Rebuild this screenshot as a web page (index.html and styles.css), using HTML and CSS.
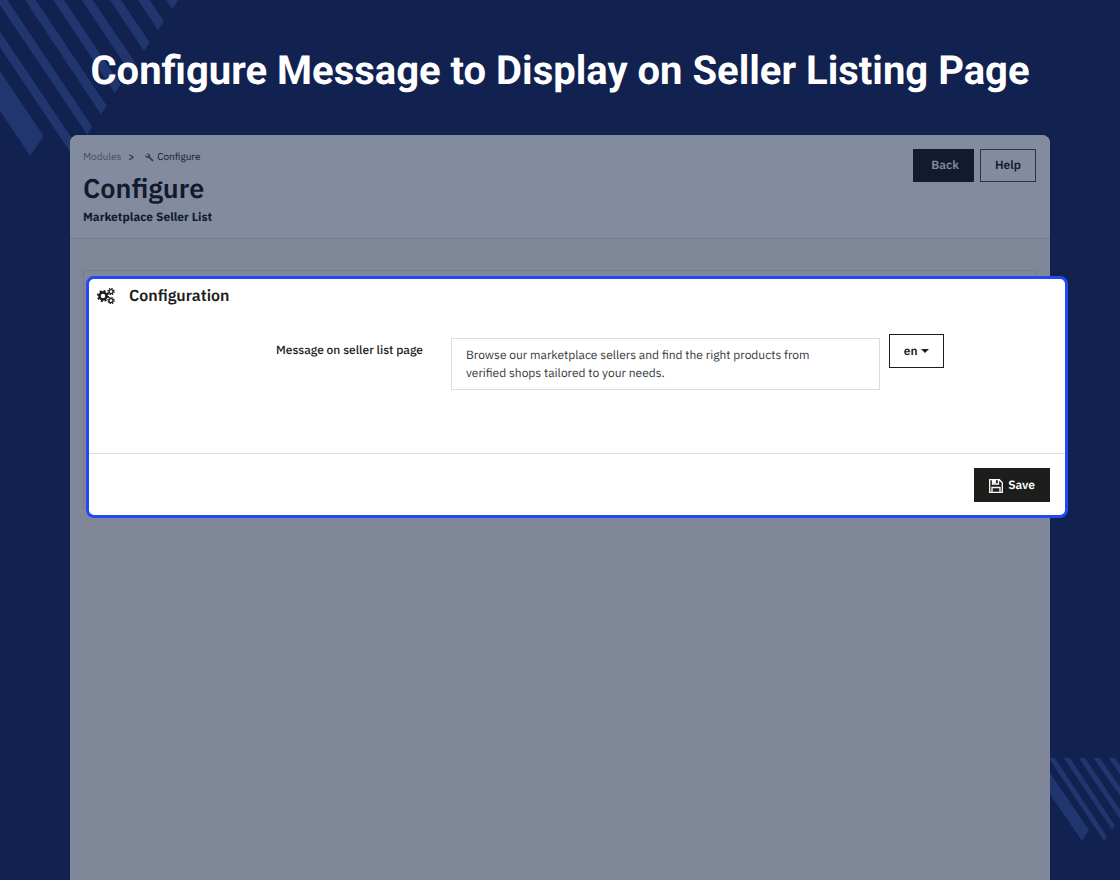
FILE: index.html
```html
<!DOCTYPE html>
<html lang="en">
<head>
    <meta charset="UTF-8">
    <meta name="viewport" content="width=device-width, initial-scale=1.0">
    <title>Configure - Marketplace Seller List</title>
    <link rel="stylesheet" href="styles.css">
</head>
<body>
    <!-- Background stripes -->
    <svg class="stripes stripes-top" width="180" height="160" viewBox="0 0 540 480" aria-hidden="true">
        <path d="M-225 0L91 468L131 408L-144 0ZM-95 0L218 467L235 443L-64 0ZM-10 0L262 404L277 380L22 0ZM75 0L303 343L320 317L107 0ZM160 0L345 279L362 254L192 0ZM245 0L389 216L407 190L278 0ZM330 0L432 153L449 127L363 0ZM414 0L474 90L492 64L449 0ZM499 0L517 27L535 0Z"/>
    </svg>
    <svg class="stripes stripes-bottom" width="70" height="84" viewBox="0 0 210 252" aria-hidden="true">
        <path d="M-74 0L96 249L117 216L-31 0ZM-4 0L162 249L171 236L15 0ZM41 0L187 216L195 203L60 0ZM86 0L212 186L212 158L105 0ZM131 0L212 118L212 90L150 0ZM176 0L212 52L212 24L195 0Z"/>
    </svg>

    <h1 class="banner-title">Configure Message to Display on Seller Listing Page</h1>

    <main class="window">
        <header class="page-head">
            <div>
                <nav class="breadcrumb">
                    <a href="#">Modules</a>
                    <span class="sep">&gt;</span>
                    <svg width="9" height="9" viewBox="0 0 24 24" aria-hidden="true">
                        <path d="M22.7 19l-9.100-9.100c.9-2.300.4-5-1.500-6.900-2-2-5-2.400-7.400-1.300L9 6 6 9 1.600 4.700C.4 7.100.9 10.100 2.900 12.100c1.900 1.900 4.600 2.400 6.900 1.500l9.100 9.100c.4.400 1 .4 1.400 0l2.300-2.300c.5-.4.5-1.100.1-1.400z"/>
                    </svg>
                    <span class="current">Configure</span>
                </nav>
                <h2 class="page-title">Configure</h2>
                <p class="page-subtitle">Marketplace Seller List</p>
            </div>
            <div class="actions">
                <button type="button" class="btn btn-back">Back</button>
                <button type="button" class="btn btn-help">Help</button>
            </div>
        </header>

        <div class="content">
            <div class="panel">
                <form class="card">
                    <h3 class="card-title">
                        <svg width="18" height="16" viewBox="0 0 36 32" aria-hidden="true">
                            <circle class="gear-ring" cx="12" cy="16" r="7"/>
                            <circle class="gear-teeth" cx="12" cy="16" r="10"/>
                            <circle class="small-ring" cx="28" cy="7" r="4"/>
                            <circle class="small-teeth" cx="28" cy="7" r="6"/>
                            <circle class="small-ring" cx="28" cy="25" r="4"/>
                            <circle class="small-teeth" cx="28" cy="25" r="6"/>
                        </svg>
                        Configuration
                    </h3>
                    <div class="form-row">
                        <label for="message">Message on seller list page</label>
                        <textarea id="message" rows="2">Browse our marketplace sellers and find the right products from verified shops tailored to your needs.</textarea>
                        <button type="button" class="btn btn-lang">en <span class="caret"></span></button>
                    </div>
                    <div class="card-foot">
                        <button type="submit" class="btn btn-save">
                            <svg width="14" height="14" viewBox="0 0 14 14" aria-hidden="true">
                                <path d="M.7.7H10.300L13.300 3.700V13.300H.7ZM3.500.7V5H9.500V.7M3 13.300V8.500H11V13.300"/>
                                <path class="solid" d="M4 1H7V4H4Z"/>
                            </svg>
                            Save
                        </button>
                    </div>
                </form>
            </div>
        </div>
    </main>
</body>
</html>
```
FILE: styles.css
```css
* {
    box-sizing: border-box;
}
body {
    margin: 0;
    min-height: 100vh;
    display: flex;
    flex-direction: column;
    position: relative;
    background-color: #112150;
    font-family: "IBM Plex Sans", "Noto Sans", sans-serif;
    font-size: 12px;
    line-height: 18px;
    text-rendering: geometricPrecision;
    color: #1d1d1b;
}
h1, h2, h3, p {
    margin: 0;
}
.stripes {
    position: absolute;
    fill: #21366e;
}
.stripes-top {
    left: 0;
    top: 0;
}
.stripes-bottom {
    right: 0;
    bottom: 38px;
}
.banner-title {
    position: relative;
    padding: 47px 20px 40px;
    font-family: Roboto, sans-serif;
    font-size: 40px;
    font-weight: 700;
    line-height: 48px;
    text-align: center;
    color: #fff;
}
/* dimmed admin window */
.window {
    flex: 1;
    position: relative;
    margin: 0 70px;
    border-radius: 8px 8px 0 0;
    background-color: #7f8799;
}
.page-head {
    display: flex;
    justify-content: space-between;
    align-items: flex-start;
    height: 104px;
    padding: 14px 14px 0 13px;
    border-bottom: 1px solid #778093;
    border-radius: 8px 8px 0 0;
    background-color: #838c9e;
    color: #121a2e;
}
.breadcrumb {
    display: flex;
    align-items: center;
    font-size: 10px;
    line-height: 16px;
}
.breadcrumb a {
    color: #444d63;
    text-decoration: none;
}
.breadcrumb .sep {
    margin: 0 11px 0 7px;
}
.breadcrumb svg {
    margin-right: 3px;
    fill: #3b4459;
}
.page-title {
    margin-top: 4px;
    font-size: 27px;
    font-weight: 600;
    line-height: 40px;
}
.page-subtitle {
    font-size: 12px;
    font-weight: 700;
}
.actions {
    display: flex;
    gap: 6px;
}
.btn {
    padding: 7px 14px 6px;
    font-family: inherit;
    font-size: 12px;
    font-weight: 600;
    line-height: 18px;
    text-rendering: inherit;
    border: 1px solid #1d1d1b;
    cursor: pointer;
}
.btn-back {
    padding-left: 17px;
    border-color: #121a2e;
    background-color: #121a2e;
    color: #838c9e;
}
.btn-help {
    border-color: #2b3449;
    background-color: transparent;
    color: #121a2e;
}
.content {
    padding: 31px 13px;
}
.panel {
    border: 1px solid #747d90;
}
/* highlighted block sits over the panel edge */
.card {
    margin: 5px -32px -11px 2px;
    border: 3px solid #2149f5;
    border-radius: 8px;
    background-color: #fff;
}
.card-title {
    display: flex;
    align-items: center;
    gap: 14px;
    padding: 5px 8px;
    font-size: 16px;
    font-weight: 600;
    line-height: 24px;
}
.gear-ring, .gear-teeth, .small-ring, .small-teeth {
    fill: none;
    stroke: #1d1d1b;
}
.gear-ring {
    stroke-width: 5;
}
.gear-teeth {
    stroke-width: 4;
    stroke-dasharray: 4 3.850;
}
.small-ring {
    stroke-width: 2.500;
}
.small-teeth {
    stroke-width: 3;
    stroke-dasharray: 2.500 2.210;
}
.form-row {
    display: grid;
    grid-template-columns: 334px 1fr 55px;
    align-items: start;
    min-height: 140px;
    padding: 21px 121px 0 0;
}
.form-row label {
    padding-top: 8px;
    font-weight: 500;
    text-align: right;
}
.form-row textarea {
    display: block;
    height: 52px;
    margin: 4px 9px 0 28px;
    padding: 8px 28px 6px 14px;
    border: 1px solid #dcdcdc;
    border-radius: 0;
    resize: none;
    overflow: hidden;
    font: inherit;
    text-rendering: inherit;
    color: #363a41;
}
.form-row .btn-lang {
    height: 34px;
    padding: 2px 0 0;
    background-color: #fff;
    color: #1d1d1b;
}
.caret {
    display: inline-block;
    margin-left: 1px;
    vertical-align: 2px;
    border-top: 4px solid #1d1d1b;
    border-left: 4px solid transparent;
    border-right: 4px solid transparent;
}
.card-foot {
    display: flex;
    justify-content: flex-end;
    padding: 14px 15px 13px;
    border-top: 1px solid #dfdfdf;
}
.btn-save {
    display: flex;
    align-items: center;
    gap: 5px;
    padding: 8px 14px 6px;
    background-color: #1d1d1b;
    color: #fff;
}
.btn-save svg {
    fill: none;
    stroke: #fff;
    stroke-width: 1.300;
}
.btn-save .solid {
    fill: #fff;
    stroke: none;
}
```
